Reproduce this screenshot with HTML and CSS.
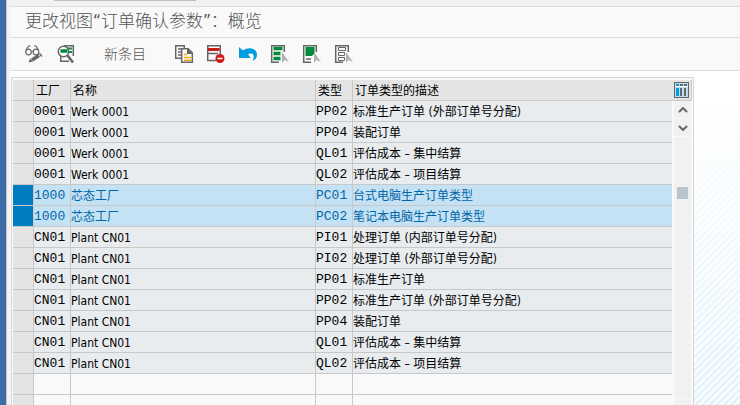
FILE: index.html
```html
<!DOCTYPE html>
<html lang="zh-CN">
<head>
<meta charset="utf-8">
<title>更改视图“订单确认参数”：概览</title>
<link rel="stylesheet" href="styles.css">
</head>
<body>
<div class="window">
  <div class="command-bar"><div class="command-field"></div></div>
  <h1 class="title">更改视图“订单确认参数”：概览</h1>
  <div class="toolbar">
    <button class="tool" aria-label="显示/更改"><svg width="20" height="20" viewBox="0 0 20 20" fill="none" stroke="#666" stroke-width="1.2"><circle cx="4.500" cy="8" r="2.800"/><circle cx="12" cy="8" r="2.800"/><path d="M7.200 7.500h2M2 6l2.500-4h2M14.500 6L12 2h-2"/><path d="M8 16l7-4.500" stroke-width="3.600"/><path d="M4.500 18.500l1.500-4 3 3z" fill="#666" stroke="none"/><path d="M15.500 9.500l2.500 3" stroke-width="1.500"/></svg></button>
    <button class="tool" aria-label="查找"><svg width="20" height="20" viewBox="0 0 20 20" fill="none" stroke="#666" stroke-width="1.500"><path d="M8 1.700h9.300V12M4.700 12v5.300H13"/><path d="M11 4.500h5M11 8h5" stroke="#009640" stroke-width="2"/><circle cx="7.500" cy="7.500" r="5.200" fill="#fff"/><path d="M4.500 7h7" stroke="#008a3b" stroke-width="3.500"/><path d="M11.500 11.500l5.500 7" stroke-width="2.600"/></svg></button>
    <button class="tool tool-text">新条目</button>
    <button class="tool" aria-label="复制为"><svg width="20" height="20" viewBox="0 0 20 20" fill="none" stroke="#666" stroke-width="1.500"><path d="M7 14.300H1.700V1.700h8.600V4M4 5h3M4 8h3M4 11h3"/><path d="M7.700 4.700h6.500l4.100 4.100v9.500H7.700z" fill="#fff"/><path d="M13 4v6h6z" fill="#666" stroke="none"/><path d="M10 10.500h3M10 13.500h7M10 16.300h7" stroke="#f5a800"/></svg></button>
    <button class="tool" aria-label="删除"><svg width="20" height="20" viewBox="0 0 20 20" fill="none" stroke="#666" stroke-width="1.500"><path d="M10 16.500H1.700V1.700h12.600V10M2 9.500h10"/><path d="M2 5.500h11.500" stroke="#cc1919" stroke-width="3"/><circle cx="14" cy="14.500" r="4.500" fill="#cc1919" stroke="none"/><path d="M11.500 14.500h5" stroke="#fff" stroke-width="1.500"/></svg></button>
    <button class="tool" aria-label="撤销"><svg width="20" height="20" viewBox="0 0 20 20" fill="#009de0"><path d="M1 3l4 3.500C10 2.500 19 3.500 19 11c0 3-2 5-4.500 6 2-4 1.500-7-1-7.500-1.500-.3-2.500 0-3.500.5l2.500 4H1z"/></svg></button>
    <button class="tool" aria-label="全选"><svg width="20" height="20" viewBox="0 0 20 20" fill="none" stroke="#666" stroke-width="1.500"><path d="M9 18.300H1.700V1.700h12.600V8"/><path d="M3.500 4.500h9M3.500 9.500h7M3.500 14.500h7" stroke="#008a3b" stroke-width="3.400"/><path d="M12 8v11l2.500-3 4.500 2z" fill="#b2b2b6" stroke="none"/></svg></button>
    <button class="tool" aria-label="选择块"><svg width="20" height="20" viewBox="0 0 20 20" fill="none" stroke="#666" stroke-width="1.500"><path d="M9 18.300H1.700V1.700h12.600V8M4 15h5"/><path d="M3.500 3h9v6L10 12H3.500z" fill="#008a3b" stroke="none"/><path d="M12 8v11l2.500-3 4.500 2z" fill="#b2b2b6" stroke="none"/></svg></button>
    <button class="tool" aria-label="取消全选"><svg width="20" height="20" viewBox="0 0 20 20" fill="none" stroke="#666" stroke-width="1.500"><path d="M9 18.300H1.700V1.700h12.600V8"/><path d="M4.500 3.500h7v3h-7zM4.500 8.500h6v3h-6zM4.500 13.500h6v3h-6z" stroke-width="1"/><path d="M12 8v11l2.500-3 4.500 2z" fill="#b2b2b6" stroke="none"/></svg></button>
  </div>
  <main class="work-area">
    <div class="panel">
      <table class="grid">
        <colgroup><col class="c-sel"><col class="c-plant"><col class="c-name"><col class="c-type"><col></colgroup>
        <thead><tr><th></th><th>工厂</th><th>名称</th><th>类型</th><th>订单类型的描述</th></tr></thead>
        <tbody>
          <tr><td></td><td class="code">0001</td><td>Werk 0001</td><td class="code">PP02</td><td>标准生产订单 (外部订单号分配)</td></tr>
          <tr><td></td><td class="code">0001</td><td>Werk 0001</td><td class="code">PP04</td><td>装配订单</td></tr>
          <tr><td></td><td class="code">0001</td><td>Werk 0001</td><td class="code">QL01</td><td>评估成本 – 集中结算</td></tr>
          <tr><td></td><td class="code">0001</td><td>Werk 0001</td><td class="code">QL02</td><td>评估成本 – 项目结算</td></tr>
          <tr class="selected"><td></td><td class="code">1000</td><td>芯态工厂</td><td class="code">PC01</td><td>台式电脑生产订单类型</td></tr>
          <tr class="selected"><td></td><td class="code">1000</td><td>芯态工厂</td><td class="code">PC02</td><td>笔记本电脑生产订单类型</td></tr>
          <tr><td></td><td class="code">CN01</td><td>Plant CN01</td><td class="code">PI01</td><td>处理订单 (内部订单号分配)</td></tr>
          <tr><td></td><td class="code">CN01</td><td>Plant CN01</td><td class="code">PI02</td><td>处理订单 (外部订单号分配)</td></tr>
          <tr><td></td><td class="code">CN01</td><td>Plant CN01</td><td class="code">PP01</td><td>标准生产订单</td></tr>
          <tr><td></td><td class="code">CN01</td><td>Plant CN01</td><td class="code">PP02</td><td>标准生产订单 (外部订单号分配)</td></tr>
          <tr><td></td><td class="code">CN01</td><td>Plant CN01</td><td class="code">PP04</td><td>装配订单</td></tr>
          <tr><td></td><td class="code">CN01</td><td>Plant CN01</td><td class="code">QL01</td><td>评估成本 – 集中结算</td></tr>
          <tr><td></td><td class="code">CN01</td><td>Plant CN01</td><td class="code">QL02</td><td>评估成本 – 项目结算</td></tr>
          <tr class="empty"><td></td><td></td><td></td><td></td><td></td></tr>
          <tr class="empty"><td></td><td></td><td></td><td></td><td></td></tr>
        </tbody>
      </table>
      <div class="side">
        <button class="config" aria-label="表设置"><svg width="15" height="16" viewBox="0 0 15 16"><path fill="#666" d="M0 0h15v16H0z"/><path fill="#b9dcf2" d="M1 1h13v14H1z"/><path fill="#fff" d="M1 4h13v1H1z"/><path fill="#009de0" d="M2 2h3v2H2zM2 6h3v8H2z"/><path fill="#666" d="M6 2h3v2H6zM10 2h3v2h-3zM6 6h2v8H6zM10 6h2v8h-2z"/></svg></button>
        <div class="scrollbar">
          <button class="arrow" aria-label="向上"><svg width="10" height="6" viewBox="0 0 10 6" fill="none" stroke="#666" stroke-width="2"><path d="M1 5l4-4 4 4"/></svg></button>
          <button class="arrow" aria-label="向下"><svg width="10" height="6" viewBox="0 0 10 6" fill="none" stroke="#666" stroke-width="2"><path d="M1 1l4 4 4-4"/></svg></button>
          <div class="track"><div class="thumb"></div></div>
          <button class="arrow" aria-label="上一行"><svg width="10" height="6" viewBox="0 0 10 6" fill="none" stroke="#666" stroke-width="2"><path d="M1 5l4-4 4 4"/></svg></button>
        </div>
      </div>
    </div>
  </main>
</div>
</body>
</html>
```
FILE: styles.css
```css
* {
  box-sizing: border-box;
}

body {
  margin: 0;
  height: 100vh;
  overflow: hidden;
  background: #3d6ca6;
  padding-left: 6px;
  font: 12px/20px "DejaVu Sans Condensed", "Noto Sans CJK SC", sans-serif;
  color: #000;
}

button {
  border: 0;
  padding: 0;
  background: none;
  font: inherit;
  color: #666;
  display: flex;
  align-items: center;
  justify-content: center;
}

.window {
  height: 100%;
  display: flex;
  flex-direction: column;
  border-left: 1px solid #c4c4c4;
  padding-left: 3px;
  background: #f5f1f2;
}

.command-bar {
  height: 7px;
  flex: none;
  background: #f2f2f2;
  border-bottom: 1px solid #dcdcdc;
  padding-left: 44px;
}

.command-field {
  width: 142px;
  height: 1px;
  background: #bfbfbf;
}

.title {
  margin: 0;
  flex: none;
  height: 31px;
  padding-left: 15px;
  background: #f9f9f9;
  border-bottom: 1px solid #dcdcdc;
  font: 17px/29px "DejaVu Sans Condensed", "Noto Sans CJK SC", sans-serif;
  font-weight: 300;
  color: #555;
}

.toolbar {
  flex: none;
  height: 33px;
  display: flex;
  padding-left: 8px;
  background: #f9f9f9;
  border-bottom: 1px solid #dcdcdc;
}

.tool {
  width: 32px;
}

.tool-text {
  width: 86px;
  font-size: 14px;
  font-weight: 300;
  color: #555;
}

.work-area {
  flex: 1;
  min-height: 0;
  padding: 6px 46px 0 1px;
  background:
    linear-gradient(#fff 0, #fff 10%, #fff0 100%),
    repeating-linear-gradient(135deg, #e4f3fb 0 2px, #fdfeff 3px 4px, #e4f3fb 5px);
}

.panel {
  height: 100%;
  overflow: hidden;
  display: flex;
  border: 1px solid #d6d6d6;
  border-bottom: 0;
  background: #f9f9f9;
  padding: 2px 1px 0;
}

.grid {
  flex: 1;
  table-layout: fixed;
  border-collapse: separate;
  border-spacing: 0;
  align-self: flex-start;
}

.c-sel { width: 21px; }
.c-plant { width: 37px; }
.c-name { width: 245px; }
.c-type { width: 37px; }

th,
td {
  height: 21px;
  padding: 2px 0 0;
  border-right: 1px solid #c8c8c8;
  border-bottom: 1px solid #c8c8c8;
  line-height: 18px;
  text-align: left;
  white-space: nowrap;
}

th {
  background: #e4e4e4;
  font-weight: 400;
  padding-left: 2px;
}

td {
  background: #e8ecef;
}

td:first-child {
  background: #e4e4e4;
}

th:last-child,
td:last-child {
  border-right: 0;
}

.code {
  font-family: "Liberation Mono", monospace;
  font-size: 13px;
}

.selected td {
  background: #c5e2f4;
  color: #0066a8;
}

.selected td:first-child {
  background: #007cc0;
}

.empty td:not(:first-child) {
  background: #f9f9f9;
}

.side {
  width: 20px;
  flex: none;
  display: flex;
  flex-direction: column;
}

.config {
  height: 21px;
  flex: none;
  background: #e4e4e4;
  border: solid #c8c8c8;
  border-width: 0 1px 1px 0;
}

.scrollbar {
  flex: 1;
  width: 17px;
  margin: 0 0 -11px 2px;
  display: flex;
  flex-direction: column;
  gap: 1px;
}

.arrow {
  height: 17px;
  flex: none;
  background: #f1f1f1;
}

.track {
  flex: 1;
  background: #f1f1f1;
  padding: 50px 3px 0;
}

.thumb {
  height: 12px;
  background: #b8c3ce;
}
```
